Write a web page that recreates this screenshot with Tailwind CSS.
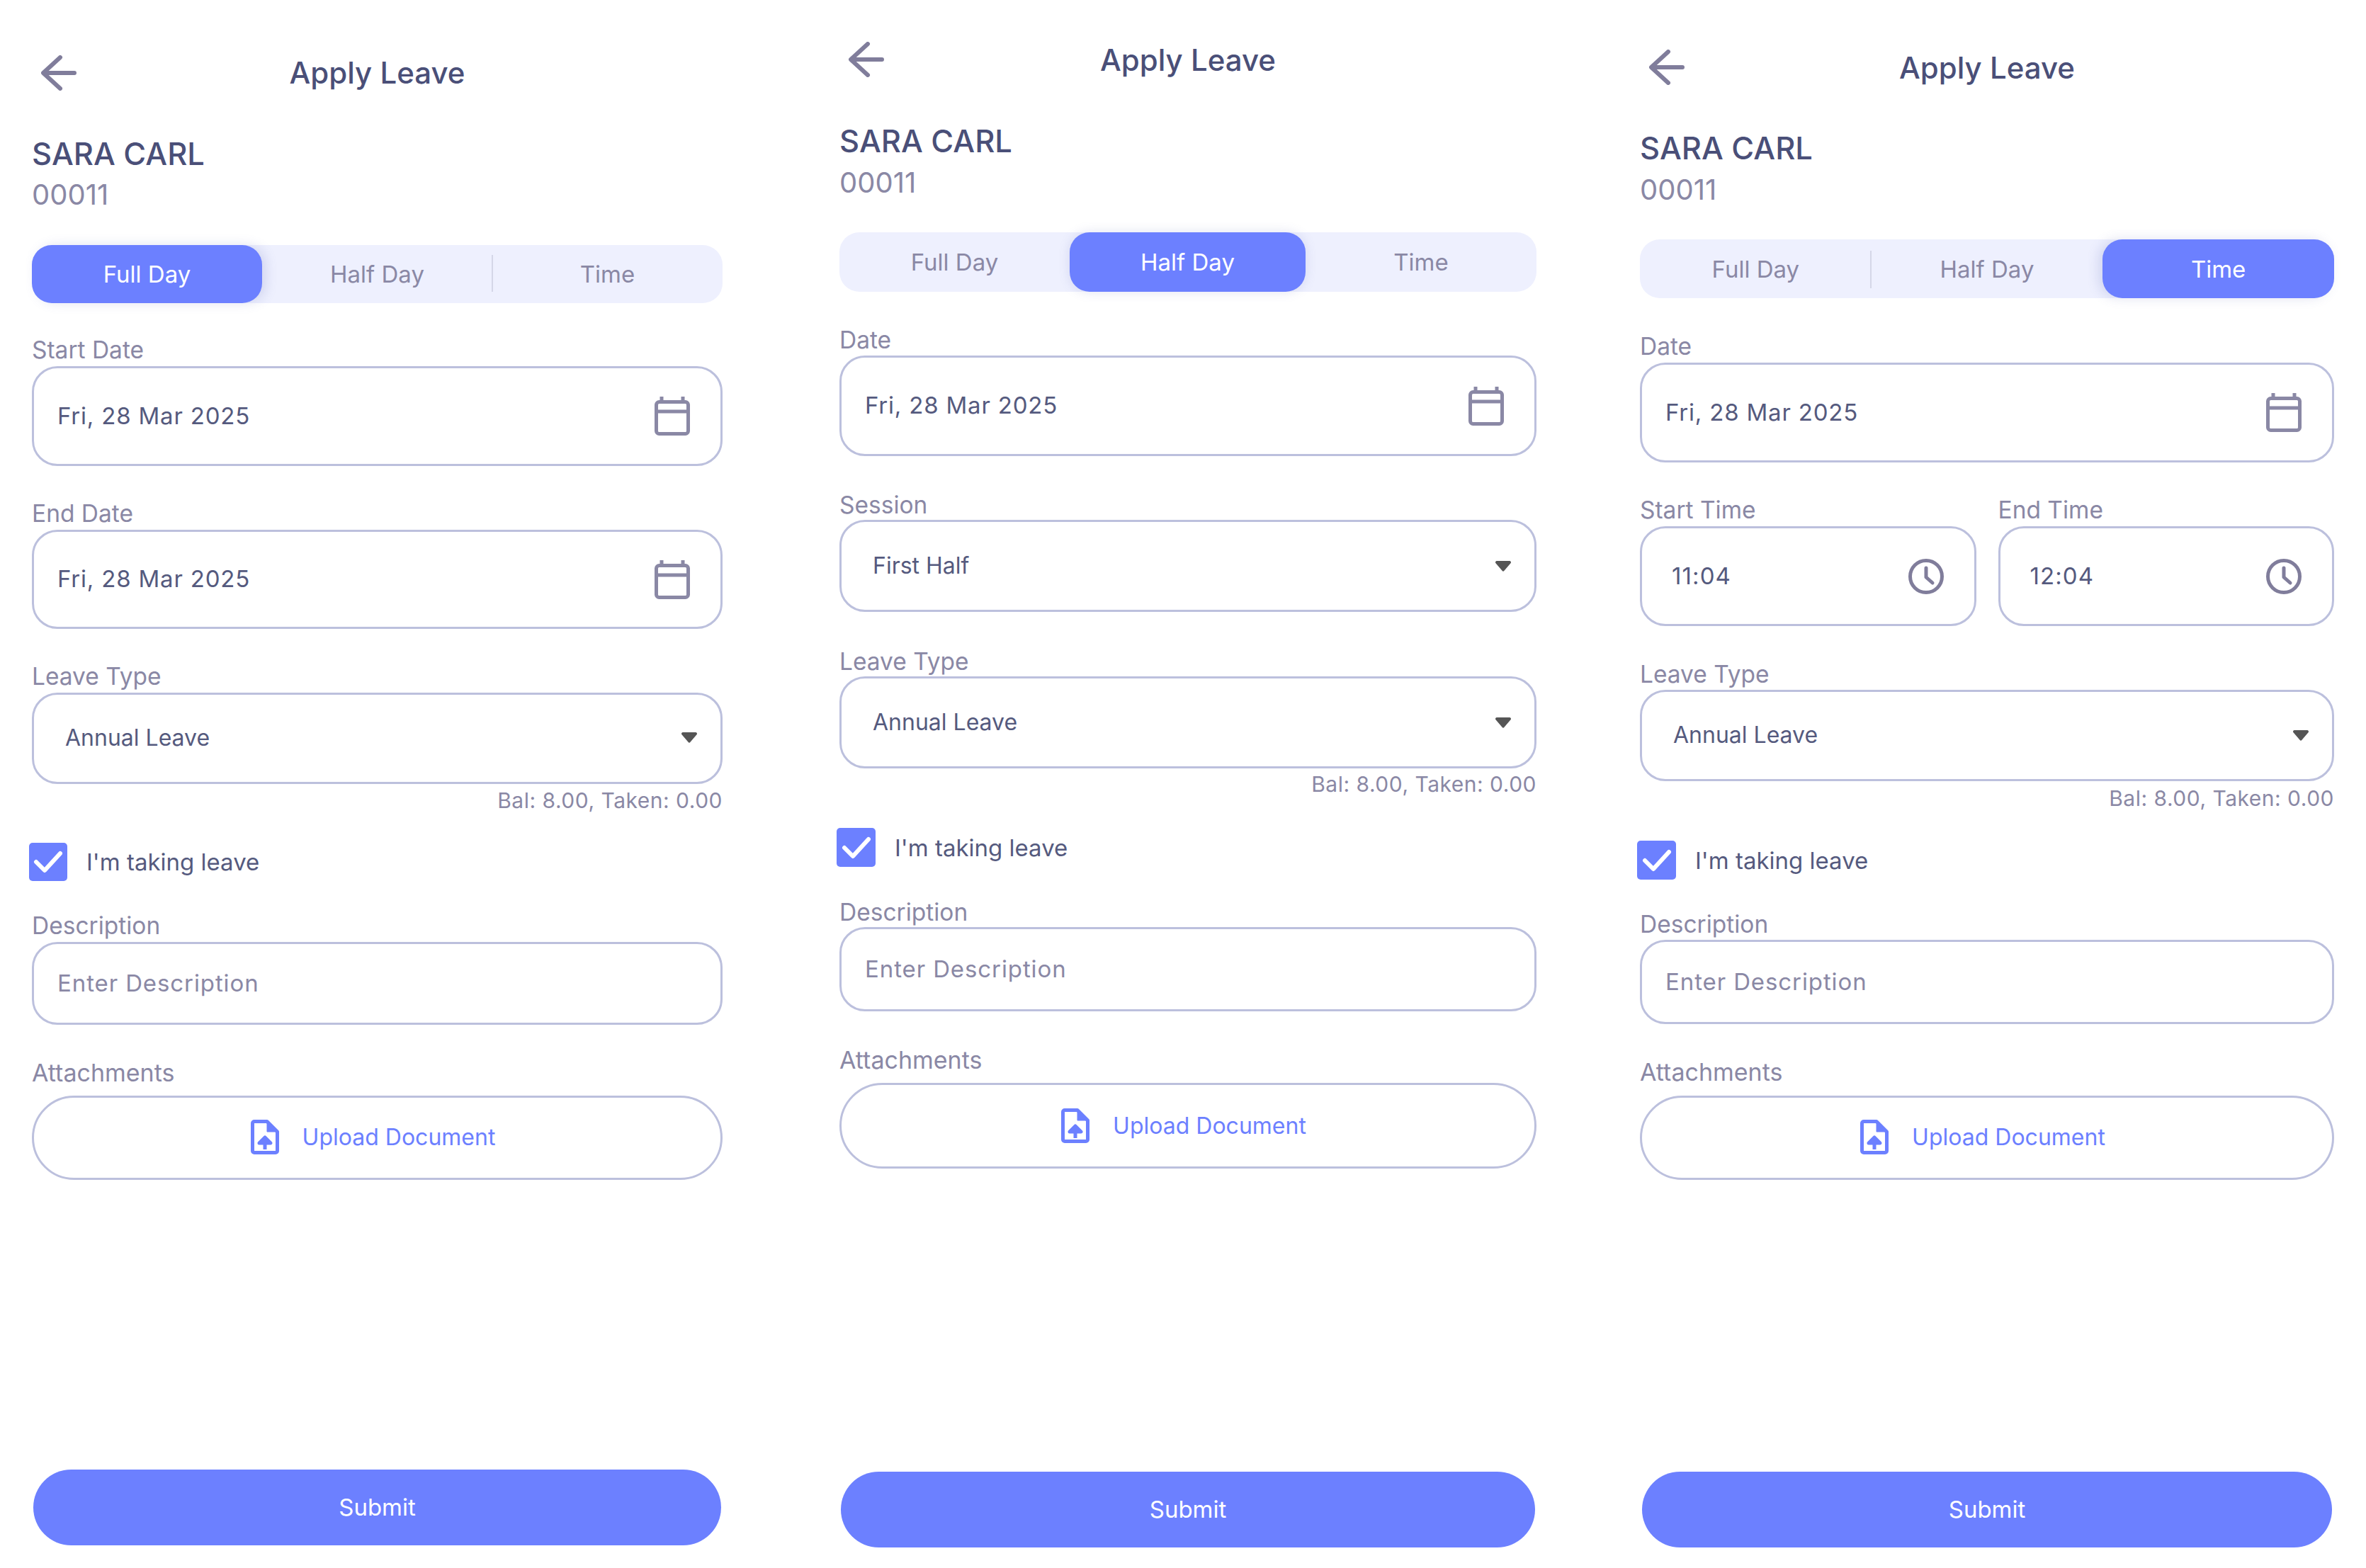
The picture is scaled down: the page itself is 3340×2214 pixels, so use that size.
<!DOCTYPE html>
<html>
<head>
<meta charset="utf-8">
<script src="https://cdn.jsdelivr.net/npm/@tailwindcss/browser@4"></script>
</head>
<body>
<div class="flex h-[2214px] w-[3340px] overflow-hidden bg-white pl-[45px] [font-family:Inter,sans-serif]">

<!-- Panel 1 -->
<section class="flex w-[975px] flex-col pt-[64px] pb-[32px]">
  <header class="relative flex h-[80px] items-center justify-center pb-[3px]">
    <svg class="absolute left-[13px] top-[14px]" width="50" height="50" viewBox="0 0 50 50" fill="none" stroke="#807d9b" stroke-width="6" stroke-linecap="round" stroke-linejoin="round"><path d="M47 25H4M27 3 3 25l24 22"/></svg>
    <h1 class="text-[42px] font-medium text-[#4a4f78]">Apply Leave</h1>
  </header>
  <div class="mt-[48px] flex h-[50px] items-center pt-[2px] text-[43.5px] font-medium text-[#4a4f78]">SARA CARL</div>
  <div class="mt-[13px] flex h-[40px] items-center text-[40px] text-[#8a88a5]">00011</div>
  <div class="relative mt-[51px] grid h-[82px] grid-cols-3 rounded-[28px] bg-[#eef0fe] text-[33px] text-[#8a88a5]">
    <div class="flex items-center justify-center rounded-[28px] bg-[#6c80ff] pt-[2px] text-white shadow-[6px_0_16px_rgba(90,100,180,0.18)]">Full Day</div>
    <div class="flex items-center justify-center pt-[2px]">Half Day</div>
    <div class="flex items-center justify-center pt-[2px]">Time</div>
    <span class="absolute left-[649px] top-[14px] h-[52px] w-[2px] bg-[#d5d7e8]"></span>
  </div>
  <label class="mt-[47px] flex h-[42px] items-center pb-[3px] text-[33.5px] text-[#8a88a5]">Start Date</label>
  <div class="flex h-[141px] items-center justify-between rounded-[36px] border-[3px] border-[#bcc0dd] pl-[33px] pr-[43px] text-[33px] tracking-[0.8px] text-[#555a7e]">
    <span>Fri, 28 Mar 2025</span>
    <svg width="50" height="55" viewBox="0 0 50 55" fill="none" stroke="#8a88a5" stroke-width="5" stroke-linejoin="round"><rect x="2.5" y="7.5" width="45" height="45" rx="4"/><path d="M3 21h44M10 0v8M40 0v8"/></svg>
  </div>
  <label class="mt-[48px] flex h-[42px] items-center pb-[3px] text-[33.5px] text-[#8a88a5]">End Date</label>
  <div class="flex h-[140px] items-center justify-between rounded-[36px] border-[3px] border-[#bcc0dd] pl-[33px] pr-[43px] text-[33px] tracking-[0.8px] text-[#555a7e]">
    <span>Fri, 28 Mar 2025</span>
    <svg width="50" height="55" viewBox="0 0 50 55" fill="none" stroke="#8a88a5" stroke-width="5" stroke-linejoin="round"><rect x="2.5" y="7.5" width="45" height="45" rx="4"/><path d="M3 21h44M10 0v8M40 0v8"/></svg>
  </div>
  <label class="mt-[48px] flex h-[42px] items-center pb-[3px] text-[33.5px] text-[#8a88a5]">Leave Type</label>
  <div class="flex h-[129px] items-center justify-between rounded-[36px] border-[3px] border-[#bcc0dd] pb-[2px] pl-[44px] pr-[33px] text-[32px] text-[#555a7e]">
    <span>Annual Leave</span>
    <svg width="22" height="15" viewBox="0 0 22 15" fill="#555555"><path d="M2 0h18a2 2 0 0 1 1.5 3.3l-9 10.5a2 2 0 0 1-3 0L.5 3.3A2 2 0 0 1 2 0z"/></svg>
  </div>
  <div class="mt-[8px] flex h-[30px] items-center justify-end text-[30px] tracking-[0.5px] text-[#8a88a5]">Bal: 8.00, Taken: 0.00</div>
  <div class="ml-[-4px] mt-[45px] flex h-[54px] items-center gap-[27px] text-[33px] text-[#555a7e]">
    <span class="flex h-[54px] w-[54px] items-center justify-center rounded-[5px] bg-[#6c80ff]"><svg width="42" height="34" viewBox="0 0 42 34" fill="none" stroke="#fff" stroke-width="6" stroke-linecap="round" stroke-linejoin="round"><path d="M4 17l12 12L38 5"/></svg></span>
    <span class="pt-[2px]">I'm taking leave</span>
  </div>
  <label class="mt-[44px] flex h-[42px] items-center pb-[3px] text-[33.5px] text-[#8a88a5]">Description</label>
  <div class="flex h-[117px] items-center rounded-[36px] border-[3px] border-[#bcc0dd] pl-[33px] text-[33px] tracking-[0.9px] text-[#8a88a5]">Enter Description</div>
  <label class="mb-[10px] mt-[48px] flex h-[42px] items-center pb-[3px] text-[34px] text-[#8a88a5]">Attachments</label>
  <div class="flex h-[119px] items-center justify-center gap-[33px] rounded-full border-[3px] border-[#bcc0dd] pb-[2px] pr-[12px] text-[32px] text-[#6c80ff]">
    <svg width="40" height="49" viewBox="0 0 40 49" fill="none"><path d="M5 2.5h18L37.5 17v27a2.5 2.5 0 0 1-2.5 2.5H5A2.5 2.5 0 0 1 2.5 44V5A2.5 2.5 0 0 1 5 2.5z" stroke="#6c80ff" stroke-width="5" stroke-linejoin="round"/><path d="M23 3v14h14z" fill="#6c80ff" stroke="#6c80ff" stroke-linejoin="round"/><path d="M20 42V28M12 33l8-8 8 8z" stroke="#6c80ff" stroke-width="5" fill="#6c80ff" stroke-linejoin="round"/></svg>
    <span>Upload Document</span>
  </div>
  <button class="mx-[2px] mt-auto flex h-[107px] items-center justify-center rounded-full bg-[#6c80ff] text-[33px] text-white">Submit</button>
</section>

<!-- Panel 2 -->
<section class="ml-[165px] flex w-[984px] flex-col pt-[46px] pb-[29px]">
  <header class="relative flex h-[80px] items-center justify-center pb-[3px]">
    <svg class="absolute left-[13px] top-[13px]" width="50" height="50" viewBox="0 0 50 50" fill="none" stroke="#807d9b" stroke-width="6" stroke-linecap="round" stroke-linejoin="round"><path d="M47 25H4M27 3 3 25l24 22"/></svg>
    <h1 class="text-[42px] font-medium text-[#4a4f78]">Apply Leave</h1>
  </header>
  <div class="mt-[48px] flex h-[50px] items-center pt-[2px] text-[43.5px] font-medium text-[#4a4f78]">SARA CARL</div>
  <div class="mt-[13px] flex h-[40px] items-center pt-[2px] text-[40px] text-[#8a88a5]">00011</div>
  <div class="mt-[51px] grid h-[84px] grid-cols-[325px_333px_1fr] rounded-[28px] bg-[#eef0fe] text-[33px] text-[#8a88a5]">
    <div class="flex items-center justify-center pt-[2px]">Full Day</div>
    <div class="flex items-center justify-center rounded-[28px] bg-[#6c80ff] pt-[2px] text-white shadow-[0_0_16px_rgba(90,100,180,0.18)]">Half Day</div>
    <div class="flex items-center justify-center pt-[2px]">Time</div>
  </div>
  <label class="mt-[48px] flex h-[42px] items-center pb-[2px] text-[33.5px] text-[#8a88a5]">Date</label>
  <div class="flex h-[142px] items-center justify-between rounded-[36px] border-[3px] border-[#bcc0dd] pl-[33px] pr-[43px] text-[33px] tracking-[0.8px] text-[#555a7e]">
    <span>Fri, 28 Mar 2025</span>
    <svg width="50" height="55" viewBox="0 0 50 55" fill="none" stroke="#8a88a5" stroke-width="5" stroke-linejoin="round"><rect x="2.5" y="7.5" width="45" height="45" rx="4"/><path d="M3 21h44M10 0v8M40 0v8"/></svg>
  </div>
  <label class="mt-[48px] flex h-[42px] items-center text-[33.5px] text-[#8a88a5]">Session</label>
  <div class="flex h-[130px] items-center justify-between rounded-[36px] border-[3px] border-[#bcc0dd] pl-[44px] pr-[33px] text-[32px] text-[#555a7e]">
    <span>First Half</span>
    <svg width="22" height="15" viewBox="0 0 22 15" fill="#555555"><path d="M2 0h18a2 2 0 0 1 1.5 3.3l-9 10.5a2 2 0 0 1-3 0L.5 3.3A2 2 0 0 1 2 0z"/></svg>
  </div>
  <label class="mt-[49px] flex h-[42px] items-center text-[33.5px] text-[#8a88a5]">Leave Type</label>
  <div class="flex h-[130px] items-center justify-between rounded-[36px] border-[3px] border-[#bcc0dd] pl-[44px] pr-[33px] text-[32px] text-[#555a7e]">
    <span>Annual Leave</span>
    <svg width="22" height="15" viewBox="0 0 22 15" fill="#555555"><path d="M2 0h18a2 2 0 0 1 1.5 3.3l-9 10.5a2 2 0 0 1-3 0L.5 3.3A2 2 0 0 1 2 0z"/></svg>
  </div>
  <div class="mt-[7px] flex h-[30px] items-center justify-end text-[30px] tracking-[0.5px] text-[#8a88a5]">Bal: 8.00, Taken: 0.00</div>
  <div class="ml-[-4px] mt-[47px] flex h-[55px] items-center gap-[27px] text-[33px] text-[#555a7e]">
    <span class="flex h-[55px] w-[55px] items-center justify-center rounded-[5px] bg-[#6c80ff]"><svg width="42" height="34" viewBox="0 0 42 34" fill="none" stroke="#fff" stroke-width="6" stroke-linecap="round" stroke-linejoin="round"><path d="M4 17l12 12L38 5"/></svg></span>
    <span class="pt-[3px]">I'm taking leave</span>
  </div>
  <label class="mt-[43px] flex h-[42px] items-center text-[33.5px] text-[#8a88a5]">Description</label>
  <div class="flex h-[119px] items-center rounded-[36px] border-[3px] border-[#bcc0dd] pl-[33px] text-[33px] tracking-[0.9px] text-[#8a88a5]">Enter Description</div>
  <label class="mb-[12px] mt-[47px] flex h-[42px] items-center text-[34px] text-[#8a88a5]">Attachments</label>
  <div class="flex h-[121px] items-center justify-center gap-[33px] rounded-full border-[3px] border-[#bcc0dd] pr-[12px] text-[32px] text-[#6c80ff]">
    <svg width="40" height="49" viewBox="0 0 40 49" fill="none"><path d="M5 2.5h18L37.5 17v27a2.5 2.5 0 0 1-2.5 2.5H5A2.5 2.5 0 0 1 2.5 44V5A2.5 2.5 0 0 1 5 2.5z" stroke="#6c80ff" stroke-width="5" stroke-linejoin="round"/><path d="M23 3v14h14z" fill="#6c80ff" stroke="#6c80ff" stroke-linejoin="round"/><path d="M20 42V28M12 33l8-8 8 8z" stroke="#6c80ff" stroke-width="5" fill="#6c80ff" stroke-linejoin="round"/></svg>
    <span>Upload Document</span>
  </div>
  <button class="mx-[2px] mt-auto flex h-[107px] items-center justify-center rounded-full bg-[#6c80ff] text-[33px] text-white">Submit</button>
</section>

<!-- Panel 3 -->
<section class="ml-[146px] flex w-[980px] flex-col pt-[56px] pb-[29px]">
  <header class="relative flex h-[80px] items-center justify-center pb-[2px]">
    <svg class="absolute left-[13px] top-[14px]" width="50" height="50" viewBox="0 0 50 50" fill="none" stroke="#807d9b" stroke-width="6" stroke-linecap="round" stroke-linejoin="round"><path d="M47 25H4M27 3 3 25l24 22"/></svg>
    <h1 class="text-[42px] font-medium text-[#4a4f78]">Apply Leave</h1>
  </header>
  <div class="mt-[48px] flex h-[50px] items-center pt-[2px] text-[43.5px] font-medium text-[#4a4f78]">SARA CARL</div>
  <div class="mt-[13px] flex h-[40px] items-center pt-[2px] text-[40px] text-[#8a88a5]">00011</div>
  <div class="relative mt-[51px] grid h-[83px] grid-cols-3 rounded-[28px] bg-[#eef0fe] text-[33px] text-[#8a88a5]">
    <div class="flex items-center justify-center pt-[2px]">Full Day</div>
    <div class="flex items-center justify-center pt-[2px]">Half Day</div>
    <div class="flex items-center justify-center rounded-[28px] bg-[#6c80ff] pt-[2px] text-white shadow-[-6px_0_16px_rgba(90,100,180,0.18)]">Time</div>
    <span class="absolute left-[325px] top-[16px] h-[53px] w-[2px] bg-[#d5d7e8]"></span>
  </div>
  <label class="mt-[49px] flex h-[42px] items-center pb-[3px] text-[33.5px] text-[#8a88a5]">Date</label>
  <div class="flex h-[141px] items-center justify-between rounded-[36px] border-[3px] border-[#bcc0dd] pl-[33px] pr-[43px] text-[33px] tracking-[0.8px] text-[#555a7e]">
    <span>Fri, 28 Mar 2025</span>
    <svg width="50" height="55" viewBox="0 0 50 55" fill="none" stroke="#8a88a5" stroke-width="5" stroke-linejoin="round"><rect x="2.5" y="7.5" width="45" height="45" rx="4"/><path d="M3 21h44M10 0v8M40 0v8"/></svg>
  </div>
  <div class="mt-[48px] grid grid-cols-2 gap-[31px]">
    <div>
      <label class="flex h-[42px] items-center pb-[3px] text-[33.5px] text-[#8a88a5]">Start Time</label>
      <div class="flex h-[141px] items-center justify-between rounded-[36px] border-[3px] border-[#bcc0dd] pl-[42px] pr-[43px] text-[33px] tracking-[1.1px] text-[#555a7e]">
        <span>11:04</span>
        <svg width="50" height="50" viewBox="0 0 50 50" fill="none" stroke="#807d9b" stroke-width="5" stroke-linecap="round" stroke-linejoin="round"><circle cx="25" cy="25" r="22.5"/><path d="M25 13v13l9 8"/></svg>
      </div>
    </div>
    <div>
      <label class="flex h-[42px] items-center pb-[3px] text-[33.5px] text-[#8a88a5]">End Time</label>
      <div class="flex h-[141px] items-center justify-between rounded-[36px] border-[3px] border-[#bcc0dd] pl-[42px] pr-[43px] text-[33px] tracking-[1.1px] text-[#555a7e]">
        <span>12:04</span>
        <svg width="50" height="50" viewBox="0 0 50 50" fill="none" stroke="#807d9b" stroke-width="5" stroke-linecap="round" stroke-linejoin="round"><circle cx="25" cy="25" r="22.5"/><path d="M25 13v13l9 8"/></svg>
      </div>
    </div>
  </div>
  <label class="mt-[48px] flex h-[42px] items-center pb-[2px] text-[33.5px] text-[#8a88a5]">Leave Type</label>
  <div class="flex h-[129px] items-center justify-between rounded-[36px] border-[3px] border-[#bcc0dd] pb-[1px] pl-[44px] pr-[33px] text-[32px] text-[#555a7e]">
    <span>Annual Leave</span>
    <svg width="22" height="15" viewBox="0 0 22 15" fill="#555555"><path d="M2 0h18a2 2 0 0 1 1.5 3.3l-9 10.5a2 2 0 0 1-3 0L.5 3.3A2 2 0 0 1 2 0z"/></svg>
  </div>
  <div class="mt-[9px] flex h-[30px] items-center justify-end text-[30px] tracking-[0.5px] text-[#8a88a5]">Bal: 8.00, Taken: 0.00</div>
  <div class="ml-[-4px] mt-[45px] flex h-[55px] items-center gap-[27px] text-[33px] text-[#555a7e]">
    <span class="flex h-[55px] w-[55px] items-center justify-center rounded-[5px] bg-[#6c80ff]"><svg width="42" height="34" viewBox="0 0 42 34" fill="none" stroke="#fff" stroke-width="6" stroke-linecap="round" stroke-linejoin="round"><path d="M4 17l12 12L38 5"/></svg></span>
    <span class="pt-[3px]">I'm taking leave</span>
  </div>
  <label class="mt-[43px] flex h-[42px] items-center pb-[2px] text-[33.5px] text-[#8a88a5]">Description</label>
  <div class="flex h-[119px] items-center rounded-[36px] border-[3px] border-[#bcc0dd] pl-[33px] text-[33px] tracking-[0.9px] text-[#8a88a5]">Enter Description</div>
  <label class="mb-[12px] mt-[47px] flex h-[42px] items-center pb-[2px] text-[34px] text-[#8a88a5]">Attachments</label>
  <div class="flex h-[119px] items-center justify-center gap-[33px] rounded-full border-[3px] border-[#bcc0dd] pb-[2px] pr-[12px] text-[32px] text-[#6c80ff]">
    <svg width="40" height="49" viewBox="0 0 40 49" fill="none"><path d="M5 2.5h18L37.5 17v27a2.5 2.5 0 0 1-2.5 2.5H5A2.5 2.5 0 0 1 2.5 44V5A2.5 2.5 0 0 1 5 2.5z" stroke="#6c80ff" stroke-width="5" stroke-linejoin="round"/><path d="M23 3v14h14z" fill="#6c80ff" stroke="#6c80ff" stroke-linejoin="round"/><path d="M20 42V28M12 33l8-8 8 8z" stroke="#6c80ff" stroke-width="5" fill="#6c80ff" stroke-linejoin="round"/></svg>
    <span>Upload Document</span>
  </div>
  <button class="mx-[3px] mt-auto flex h-[107px] items-center justify-center rounded-full bg-[#6c80ff] text-[33px] text-white">Submit</button>
</section>
</div>
</body>
</html>
